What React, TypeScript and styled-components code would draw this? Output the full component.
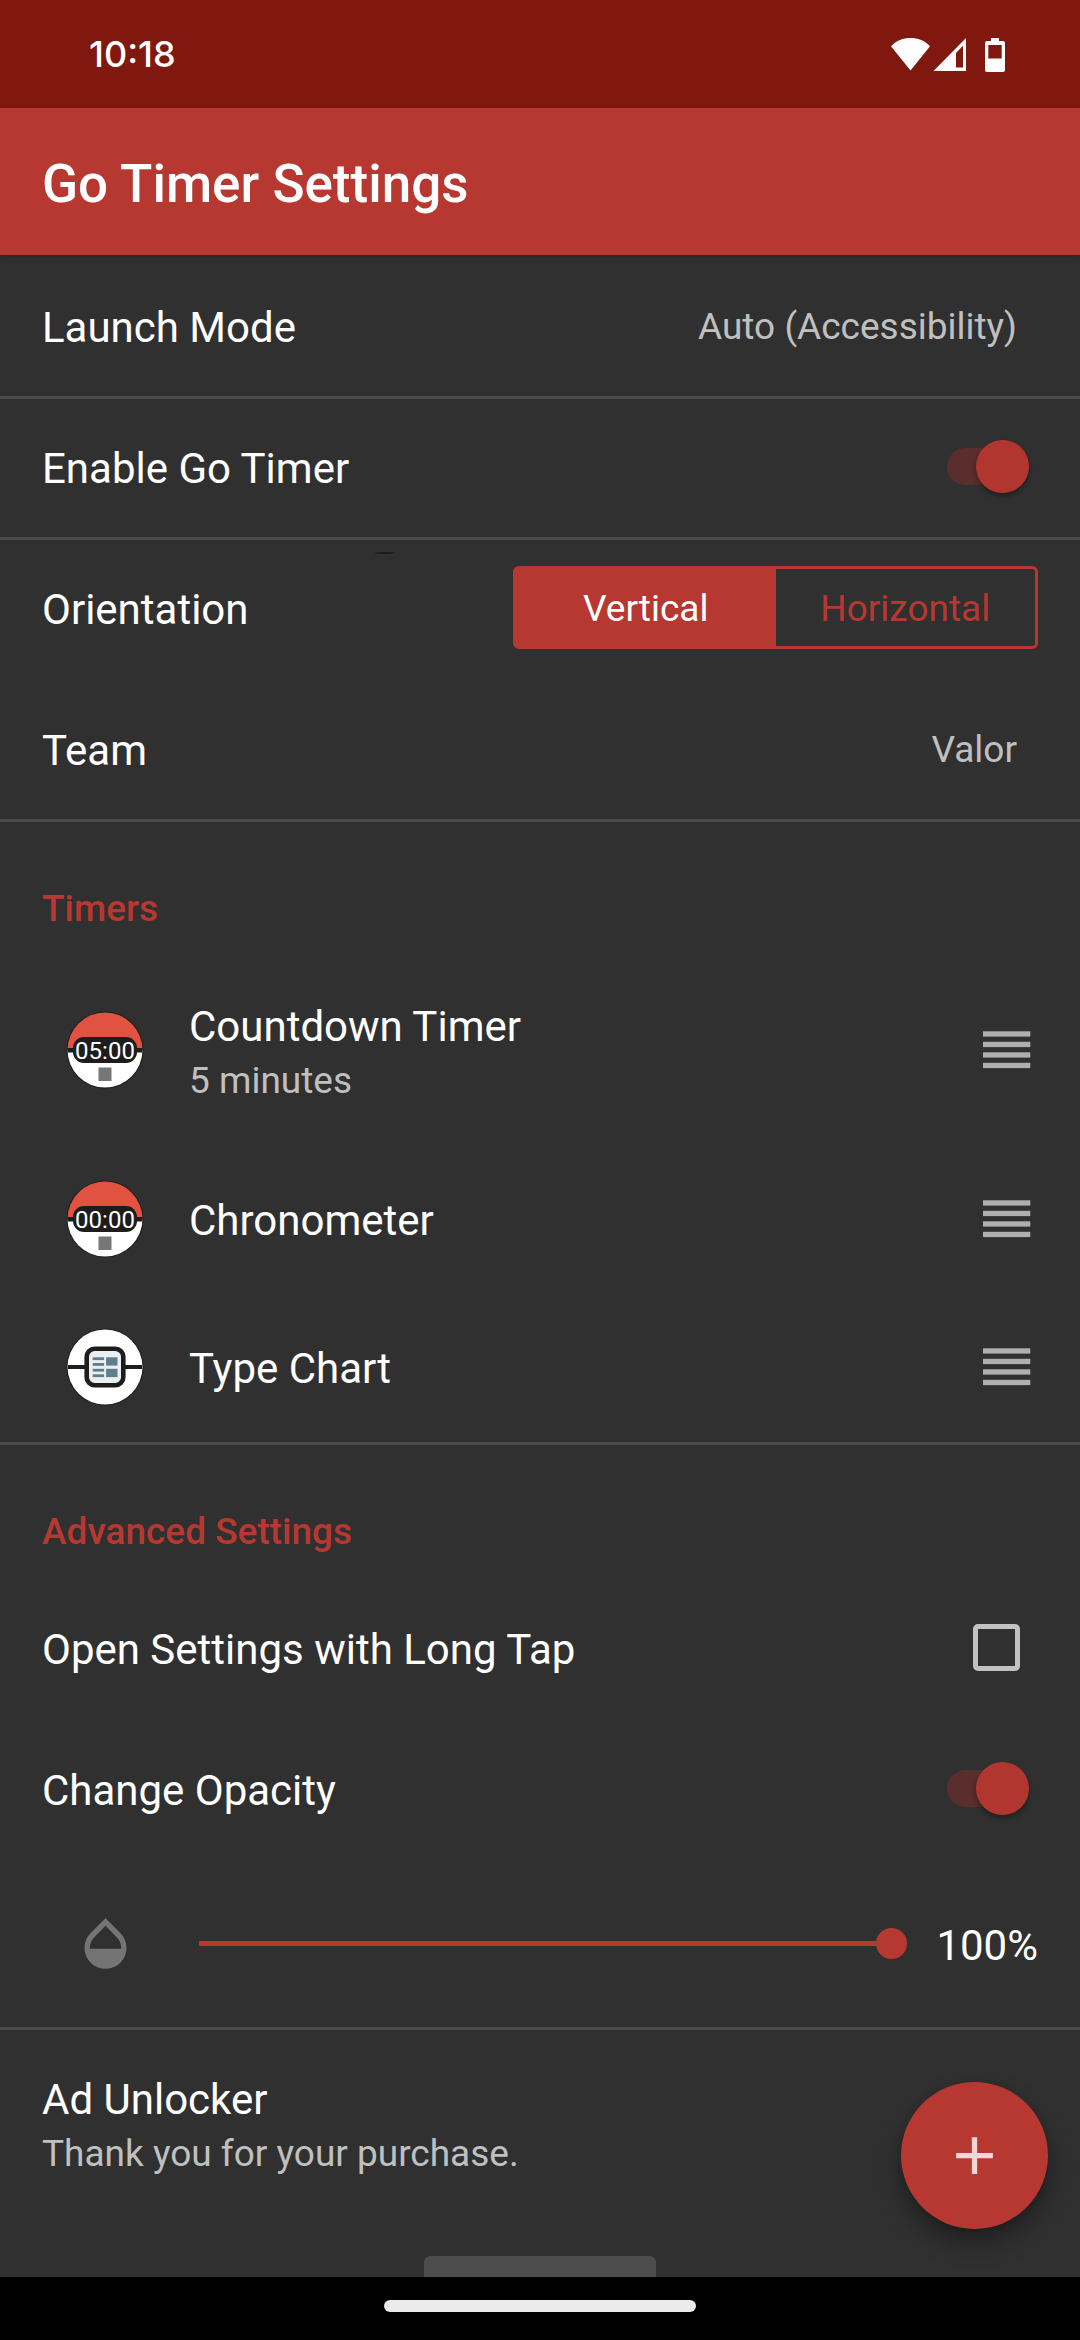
import React, { useId, useState } from "react";
import styled, { createGlobalStyle, css } from "styled-components";

const color = {
  accent: "#b73831",
  knob: "#b1362f",
  knobTrack: "#592e2c",
  statusBar: "#811810",
  surface: "#303030",
  divider: "#4a4a4a",
  text: "#ffffff",
  muted: "#c0c0c0",
  icon: "#747474",
  handle: "#afafaf",
};

const GlobalStyle = createGlobalStyle`
  *, *::before, *::after { box-sizing: border-box; }
  body {
    margin: 0;
    background: #000;
    color: ${color.text};
    font-family: Roboto, "Liberation Sans", sans-serif;
  }
  button, input { font: inherit; color: inherit; margin: 0; }
  h1, h2, ul { margin: 0; padding: 0; }
`;

const Screen = styled.div`
  display: flex;
  flex-direction: column;
  height: 100vh;
  background: ${color.surface};
`;

const StatusBar = styled.div`
  display: flex;
  flex: none;
  align-items: center;
  justify-content: space-between;
  height: 108px;
  padding: 0 74px 0 89px;
  background: ${color.statusBar};
`;

const Clock = styled.time`
  font: 500 36px/42px Inter, Roboto, sans-serif;
`;

const StatusIcons = styled.div`
  display: flex;
  align-items: center;
  svg { display: block; }
`;

const AppBar = styled.header`
  display: flex;
  flex: none;
  align-items: center;
  height: 147px;
  padding: 4px 42px 0;
  background: ${color.accent};
  box-shadow: 0 2px 6px rgba(0, 0, 0, 0.2);
`;

const Title = styled.h1`
  font-size: 53px;
  line-height: 62px;
  font-weight: 500;
`;

const Stage = styled.div`
  position: relative;
  flex: 1;
  min-height: 0;
`;

const Scroller = styled.main`
  height: 100%;
  padding-top: 3px;
  overflow: hidden auto;
  scrollbar-width: none;
`;

const rowStyle = css<{ $divided?: boolean }>`
  display: flex;
  align-items: center;
  justify-content: space-between;
  width: 100%;
  min-height: 141px;
  padding: 0 42px;
  border: 0 solid ${(p) => (p.$divided ? color.divider : "transparent")};
  border-bottom-width: 3px;
  background: none;
  text-align: left;
`;

const Row = styled.div<{ $divided?: boolean }>`
  ${rowStyle}
`;

const RowLabel = styled.label<{ $divided?: boolean }>`
  ${rowStyle}
  cursor: pointer;
`;

const RowButton = styled.button<{ $divided?: boolean; $tall?: boolean }>`
  ${rowStyle}
  min-height: ${(p) => (p.$tall ? 192 : 141)}px;
  cursor: pointer;
`;

const Primary = styled.span`
  display: block;
  padding-top: 2px;
  font-size: 42px;
  line-height: 54px;
`;

const Secondary = styled.span`
  display: block;
  font-size: 37px;
  line-height: 54px;
  color: ${color.muted};
`;

const TwoLines = styled.span`
  display: block;
  padding-top: 3px;
`;

const Value = styled(Secondary)`
  padding-right: 21px;
`;

const Control = styled.span<{ $inset: number }>`
  display: flex;
  margin: 0 ${(p) => p.$inset}px 3px 0;
`;

const SwitchInput = styled.input`
  appearance: none;
  position: relative;
  display: flex;
  align-items: center;
  width: 82px;
  height: 53px;
  cursor: pointer;

  &::before {
    content: "";
    flex: 1;
    height: 37px;
    border-radius: 19px;
    background: #555;
  }
  &::after {
    content: "";
    position: absolute;
    left: 0;
    width: 53px;
    height: 53px;
    border-radius: 50%;
    background: #b9b9b9;
    box-shadow: 0 3px 5px rgba(0, 0, 0, 0.35);
  }
  &:checked::before { background: ${color.knobTrack}; }
  &:checked::after { left: auto; right: 0; background: ${color.knob}; }
`;

const CheckInput = styled.input`
  appearance: none;
  width: 47px;
  height: 47px;
  border: 5px solid #c1c1c1;
  border-radius: 5px;
  cursor: pointer;
  &:checked { background: ${color.accent}; border-color: ${color.accent}; }
`;

const Segments = styled.div`
  display: grid;
  grid-template-columns: 1fr 1fr;
  flex: 0 1 525px;
  height: 83px;
  margin-bottom: 3px;
  border: 3px solid ${color.accent};
  border-radius: 6px;
`;

const Segment = styled.button<{ $on: boolean }>`
  padding: 3px 0 0;
  border: 0;
  font-size: 37px;
  line-height: 54px;
  color: ${(p) => (p.$on ? color.text : color.accent)};
  background: ${(p) => (p.$on ? color.accent : "transparent")};
  cursor: pointer;
`;

const OrientationRow = styled(Row)`
  position: relative;
  &::before {
    content: "";
    position: absolute;
    top: 12px;
    left: 375px;
    width: 20px;
    height: 2px;
    border-radius: 50%;
    background: #1c1c1c;
  }
`;

const SectionTitle = styled.h2`
  padding: 60px 42px 21px;
  font-size: 37px;
  line-height: 54px;
  font-weight: 500;
  color: ${color.accent};
`;

const TimerList = styled.ul`
  list-style: none;
  border-bottom: 3px solid ${color.divider};
`;

const TimerRow = styled.li<{ $tall?: boolean }>`
  display: flex;
  align-items: center;
  gap: 21px;
  height: ${(p) => (p.$tall ? 189 : 148)}px;
  padding: 0 49px 0 42px;

  &:nth-child(2) { height: 148px; }
`;

const IconSlot = styled.span`
  display: flex;
  flex: none;
  justify-content: center;
  width: 126px;
  margin-bottom: 3px;
`;

const Grow = styled.span`
  flex: 1;
`;

const HandleButton = styled.button`
  display: flex;
  margin: 0 0 3px;
  padding: 0;
  border: 0;
  background: none;
  cursor: grab;
`;

const SliderRow = styled.div`
  display: flex;
  align-items: center;
  gap: 21px;
  height: 168px;
  padding: 0 42px;
  border-bottom: 3px solid ${color.divider};
`;

const Slider = styled.input`
  appearance: none;
  flex: 1;
  min-width: 0;
  height: 31px;
  margin: 0 8px 3px 10px;
  background: linear-gradient(${color.accent}, ${color.accent}) left center no-repeat;
  background-size: calc(var(--filled) - 15px) 5px;
  cursor: pointer;

  &::-webkit-slider-thumb {
    appearance: none;
    width: 31px;
    height: 31px;
    border-radius: 50%;
    background: ${color.accent};
  }
`;

const BottomButton = styled.button`
  display: block;
  width: 232px;
  height: 96px;
  margin: 34px auto;
  border: 0;
  border-radius: 6px;
  background: #4d4d4d;
`;

const Fab = styled.button`
  position: absolute;
  right: 32px;
  bottom: 48px;
  display: flex;
  align-items: center;
  justify-content: center;
  width: 147px;
  height: 147px;
  padding: 0;
  border: 0;
  border-radius: 50%;
  background: ${color.accent};
  box-shadow: 0 14px 26px rgba(0, 0, 0, 0.3), 0 4px 10px rgba(0, 0, 0, 0.15);
  cursor: pointer;
`;

const NavBar = styled.div`
  display: flex;
  flex: none;
  align-items: center;
  justify-content: center;
  height: 63px;
  background: #000;
`;

const Pill = styled.span`
  width: 312px;
  height: 12px;
  margin-bottom: 6px;
  border-radius: 6px;
  background: #ebebeb;
`;

function BallIcon({ time }: { time: string }) {
  const clip = useId();
  return (
    <svg width="78" height="78" viewBox="0 0 78 78">
      <clipPath id={clip}>
        <circle cx="39" cy="39" r="37.5" />
      </clipPath>
      <circle cx="39" cy="39" r="38.5" fill="#1d1d1d" />
      <g clipPath={`url(#${clip})`}>
        <rect width="78" height="39" fill="#e25241" />
        <rect y="39" width="78" height="39" fill="#fff" />
        <rect y="37" width="78" height="4.5" fill="#1d1d1d" />
      </g>
      <rect x="7" y="26" width="64" height="26" rx="11" fill="#1d1d1d" />
      <text x="39" y="48" textAnchor="middle" fontSize="24" fill="#fff">
        {time}
      </text>
      <rect x="32.5" y="56.5" width="13" height="13.5" fill="#777" />
    </svg>
  );
}

function ChartIcon() {
  return (
    <svg width="78" height="78" viewBox="0 0 78 78">
      <circle cx="39" cy="39" r="38.5" fill="#1d1d1d" />
      <circle cx="39" cy="39" r="37.5" fill="#fff" />
      <rect x="2" y="37" width="74" height="4" fill="#1d1d1d" />
      <rect x="20.7" y="20.7" width="36.6" height="36.6" rx="8" fill="#eceff1" stroke="#1d1d1d" strokeWidth="4.6" />
      <g fill="#607d8b">
        <rect x="26.7" y="29.3" width="11.4" height="2.8" />
        <rect x="26.7" y="35" width="11.4" height="2.8" />
        <rect x="26.7" y="40.8" width="11.4" height="2.8" />
        <rect x="26.7" y="46.3" width="11.4" height="2.8" />
        <rect x="40.1" y="29.3" width="11.4" height="8.3" />
        <rect x="40.1" y="40.8" width="11.4" height="8.3" />
      </g>
    </svg>
  );
}

function HandleIcon() {
  return (
    <svg width="48" height="38" viewBox="0 0 48 38" fill={color.handle}>
      <rect y="0.3" width="47.3" height="5.3" />
      <rect y="10.8" width="47.3" height="5.3" />
      <rect y="21.3" width="47.3" height="5.3" />
      <rect y="31.8" width="47.3" height="5.3" />
    </svg>
  );
}

function OpacityIcon() {
  return (
    <svg width="63" height="63" viewBox="0 0 24 24" fill={color.icon}>
      <path d="M17.66 8L12 2.35 6.34 8C4.78 9.56 4 11.64 4 13.64s.78 4.11 2.34 5.67 3.61 2.35 5.66 2.35 4.1-.79 5.66-2.35S20 15.64 20 13.64 19.22 9.56 17.66 8zM6 14c.01-2 .62-3.27 1.76-4.4L12 5.27l4.24 4.38C17.38 10.77 17.99 12 18 14H6z" />
    </svg>
  );
}

function SystemIcons() {
  return (
    <svg width="116" height="36" viewBox="0 0 116 36" fill="#fff">
      <path d="M20.5 34.5 1 10.2C6.5 4.5 13 2 20.5 2S34.5 4.5 40 10.2Z" />
      <path d="M43.500 35 76 2v33ZM66 17v14.500h7V9.800Z" fillRule="evenodd" />
      <path d="M101 2h8v3h4q2 0 2 2v27q0 2-2 2h-16q-2 0-2-2V7q0-2 2-2h4ZM98.300 9v13.500h13.400V9Z" fillRule="evenodd" />
    </svg>
  );
}

const timers = [
  { name: "Countdown Timer", detail: "5 minutes", icon: <BallIcon time="05:00" /> },
  { name: "Chronometer", icon: <BallIcon time="00:00" /> },
  { name: "Type Chart", icon: <ChartIcon /> },
];

export default function App() {
  const [enabled, setEnabled] = useState(true);
  const [orientation, setOrientation] = useState("Vertical");
  const [longTap, setLongTap] = useState(false);
  const [changeOpacity, setChangeOpacity] = useState(true);
  const [opacity, setOpacity] = useState(100);

  return (
    <Screen>
      <GlobalStyle />
      <StatusBar>
        <Clock>10:18</Clock>
        <StatusIcons>
          <SystemIcons />
        </StatusIcons>
      </StatusBar>
      <AppBar>
        <Title>Go Timer Settings</Title>
      </AppBar>
      <Stage>
        <Scroller>
          <RowButton type="button" $divided>
            <Primary>Launch Mode</Primary>
            <Value>Auto (Accessibility)</Value>
          </RowButton>
          <RowLabel $divided>
            <Primary>Enable Go Timer</Primary>
            <Control $inset={9}>
              <SwitchInput type="checkbox" role="switch" checked={enabled} onChange={(e) => setEnabled(e.target.checked)} />
            </Control>
          </RowLabel>
          <OrientationRow>
            <Primary id="orientation">Orientation</Primary>
            <Segments role="group" aria-labelledby="orientation">
              {["Vertical", "Horizontal"].map((name) => (
                <Segment
                  key={name}
                  type="button"
                  $on={orientation === name}
                  aria-pressed={orientation === name}
                  onClick={() => setOrientation(name)}
                >
                  {name}
                </Segment>
              ))}
            </Segments>
          </OrientationRow>
          <RowButton type="button" $divided>
            <Primary>Team</Primary>
            <Value>Valor</Value>
          </RowButton>

          <SectionTitle>Timers</SectionTitle>
          <TimerList>
            {timers.map((t) => (
              <TimerRow key={t.name} $tall={Boolean(t.detail)}>
                <IconSlot>{t.icon}</IconSlot>
                <Grow>
                  {t.detail ? (
                    <TwoLines>
                      <Primary>{t.name}</Primary>
                      <Secondary>{t.detail}</Secondary>
                    </TwoLines>
                  ) : (
                    <Primary>{t.name}</Primary>
                  )}
                </Grow>
                <HandleButton type="button" aria-label={`Reorder ${t.name}`}>
                  <HandleIcon />
                </HandleButton>
              </TimerRow>
            ))}
          </TimerList>

          <SectionTitle>Advanced Settings</SectionTitle>
          <RowLabel>
            <Primary>Open Settings with Long Tap</Primary>
            <Control $inset={18}>
              <CheckInput type="checkbox" checked={longTap} onChange={(e) => setLongTap(e.target.checked)} />
            </Control>
          </RowLabel>
          <RowLabel>
            <Primary>Change Opacity</Primary>
            <Control $inset={9}>
              <SwitchInput
                type="checkbox"
                role="switch"
                checked={changeOpacity}
                onChange={(e) => setChangeOpacity(e.target.checked)}
              />
            </Control>
          </RowLabel>
          <SliderRow>
            <IconSlot>
              <OpacityIcon />
            </IconSlot>
            <Slider
              type="range"
              aria-label="Opacity"
              value={opacity}
              onChange={(e) => setOpacity(Number(e.target.value))}
              style={{ "--filled": `${opacity}%` } as React.CSSProperties}
            />
            <Primary>{opacity}%</Primary>
          </SliderRow>
          <RowButton type="button" $tall>
            <TwoLines>
              <Primary>Ad Unlocker</Primary>
              <Secondary>Thank you for your purchase.</Secondary>
            </TwoLines>
          </RowButton>
          <BottomButton type="button" aria-label="More" />
        </Scroller>
        <Fab type="button" aria-label="Add timer">
          <svg width="63" height="63" viewBox="0 0 24 24" fill="#f3d6d5">
            <path d="M19 13h-6v6h-2v-6H5v-2h6V5h2v6h6z" />
          </svg>
        </Fab>
      </Stage>
      <NavBar>
        <Pill />
      </NavBar>
    </Screen>
  );
}
